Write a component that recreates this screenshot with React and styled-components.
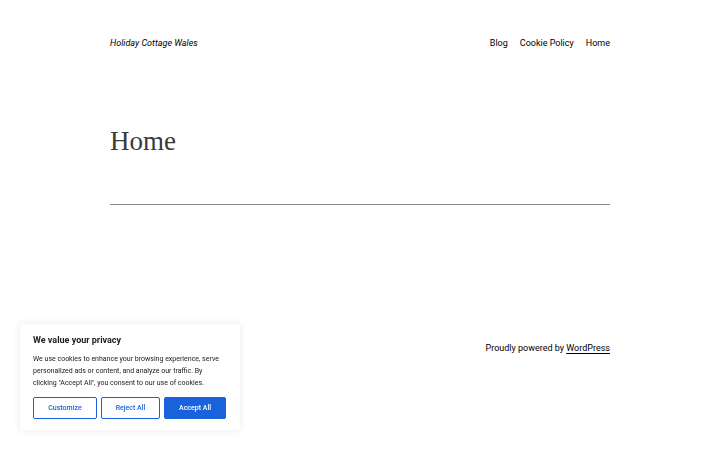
import React from 'react';
import styled, { createGlobalStyle } from 'styled-components';

const GlobalStyle = createGlobalStyle`
  html, body {
    margin: 0;
    background: #ffffff;
    color: #000000;
    font-family: Roboto, "Liberation Sans", sans-serif;
  }
  * { box-sizing: border-box; }
`;

const Page = styled.div`
  width: 500px;
  margin: 0 auto;
  min-height: 450px;
  display: flex;
  flex-direction: column;
`;

const Header = styled.header`
  display: flex;
  justify-content: space-between;
  align-items: center;
  padding-top: 35px;
  height: 51px;
  font-size: 9px;
`;

const SiteTitle = styled.a`
  font-style: italic;
  color: #000;
  text-decoration: none;
`;

const Nav = styled.nav`
  display: flex;
  gap: 12px;
  a {
    color: #000;
    text-decoration: none;
  }
`;

const Title = styled.h1`
  margin: 73px 0 0;
  font-family: "Liberation Serif", serif;
  font-weight: 400;
  font-size: 27px;
  line-height: 34px;
  color: #3a3a3a;
`;

const Separator = styled.hr`
  margin: 46px 0 0;
  border: 0;
  height: 1px;
  background: #8a8a8a;
`;

const Footer = styled.footer`
  margin-top: 135px;
  display: flex;
  justify-content: flex-end;
  font-size: 9px;
  line-height: 16px;
  a {
    color: #000;
    text-decoration: underline;
    text-underline-offset: 2px;
  }
`;

const Banner = styled.div`
  position: fixed;
  left: 20px;
  bottom: 20px;
  width: 220px;
  background: #fff;
  padding: 9px 13px 11px;
  box-shadow: 0 0 8px rgba(0, 0, 0, 0.09);
  border-radius: 3px;
  font-family: Roboto, "Liberation Sans", sans-serif;
`;

const BannerTitle = styled.p`
  margin: 0 0 5px;
  font-size: 9px;
  font-weight: 700;
  line-height: 15px;
  color: #212121;
`;

const BannerText = styled.p`
  margin: 0 0 8px;
  font-size: 7px;
  line-height: 12px;
  color: #212121;
`;

const Buttons = styled.div`
  display: grid;
  grid-template-columns: 64px 59px 62px;
  gap: 4px;
`;

const Button = styled.button`
  height: 22px;
  padding: 0;
  font-family: inherit;
  font-size: 7px;
  font-weight: 500;
  border: 1px solid #1863dc;
  border-radius: 2px;
  background: ${p => (p.$primary ? '#1863dc' : '#fff')};
  color: ${p => (p.$primary ? '#fff' : '#1863dc')};
`;

export default function App() {
  return (
    <>
      <GlobalStyle />
      <Page>
        <Header>
          <SiteTitle href="#">Holiday Cottage Wales</SiteTitle>
          <Nav>
            <a href="#">Blog</a>
            <a href="#">Cookie Policy</a>
            <a href="#">Home</a>
          </Nav>
        </Header>
        <Title>Home</Title>
        <Separator />
        <Footer>
          <span>
            Proudly powered by <a href="#">WordPress</a>
          </span>
        </Footer>
      </Page>
      <Banner>
        <BannerTitle>We value your privacy</BannerTitle>
        <BannerText>
          We use cookies to enhance your browsing experience, serve personalized ads or content, and analyze our
          traffic. By clicking "Accept All", you consent to our use of cookies.
        </BannerText>
        <Buttons>
          <Button>Customize</Button>
          <Button>Reject All</Button>
          <Button $primary>Accept All</Button>
        </Buttons>
      </Banner>
    </>
  );
}
